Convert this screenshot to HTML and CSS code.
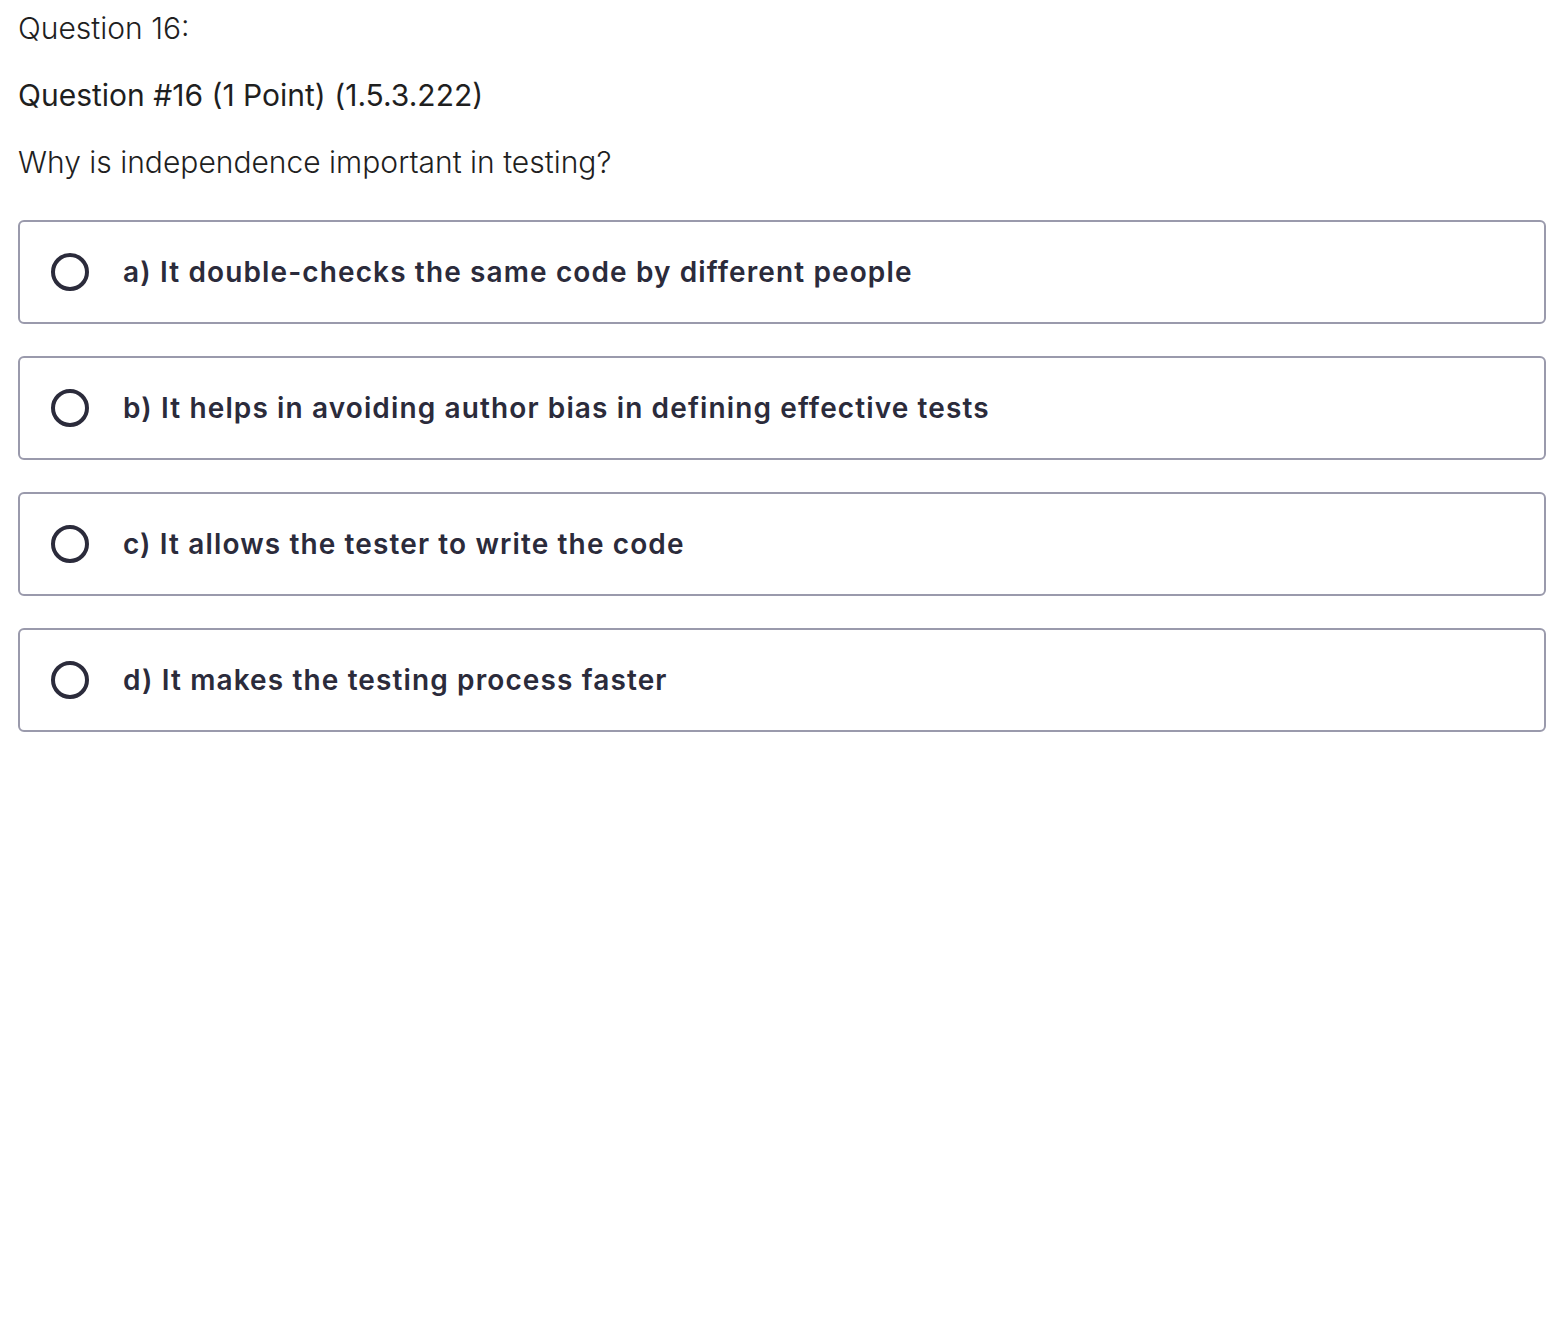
FILE: index.html
```html
<!DOCTYPE html>
<html>
<head>
<meta charset="utf-8">
<link rel="stylesheet" href="styles.css">
</head>
<body>
<div class="page">
  <div class="q-label">Question 16:</div>
  <div class="q-title">Question #16 (1 Point) (1.5.3.222)</div>
  <div class="q-text">Why is independence important in testing?</div>
  <div class="options">
    <label class="option"><span class="radio"></span><span class="opt-text">a) It double-checks the same code by different people</span></label>
    <label class="option"><span class="radio"></span><span class="opt-text">b) It helps in avoiding author bias in defining effective tests</span></label>
    <label class="option"><span class="radio"></span><span class="opt-text">c) It allows the tester to write the code</span></label>
    <label class="option"><span class="radio"></span><span class="opt-text">d) It makes the testing process faster</span></label>
  </div>
</div>
</body>
</html>
```
FILE: styles.css
```css
html, body {
  margin: 0;
  padding: 0;
  background: #ffffff;
}
.page {
  padding: 8px 20px 0 18px;
  font-family: Inter, "Liberation Sans", sans-serif;
}
.q-label {
  font-size: 30px;
  font-weight: 300;
  color: #1f1f1f;
  line-height: 40px;
}
.q-title {
  margin-top: 27px;
  font-size: 30px;
  font-weight: 400;
  color: #1f1f1f;
  line-height: 40px;
}
.q-text {
  margin-top: 27px;
  font-size: 30px;
  font-weight: 300;
  color: #1f1f1f;
  line-height: 40px;
}
.options {
  margin-top: 38px;
  display: flex;
  flex-direction: column;
  gap: 32px;
}
.option {
  display: flex;
  align-items: center;
  height: 104px;
  box-sizing: border-box;
  border: 2px solid #9a9aac;
  border-radius: 6px;
  padding-left: 31px;
}
.radio {
  width: 38px;
  height: 38px;
  box-sizing: border-box;
  border: 4px solid #2b2b3b;
  border-radius: 50%;
  flex: none;
}
.opt-text {
  margin-left: 34px;
  font-size: 28px;
  font-weight: 600;
  letter-spacing: 1.12px;
  color: #2b2b3b;
}
```
